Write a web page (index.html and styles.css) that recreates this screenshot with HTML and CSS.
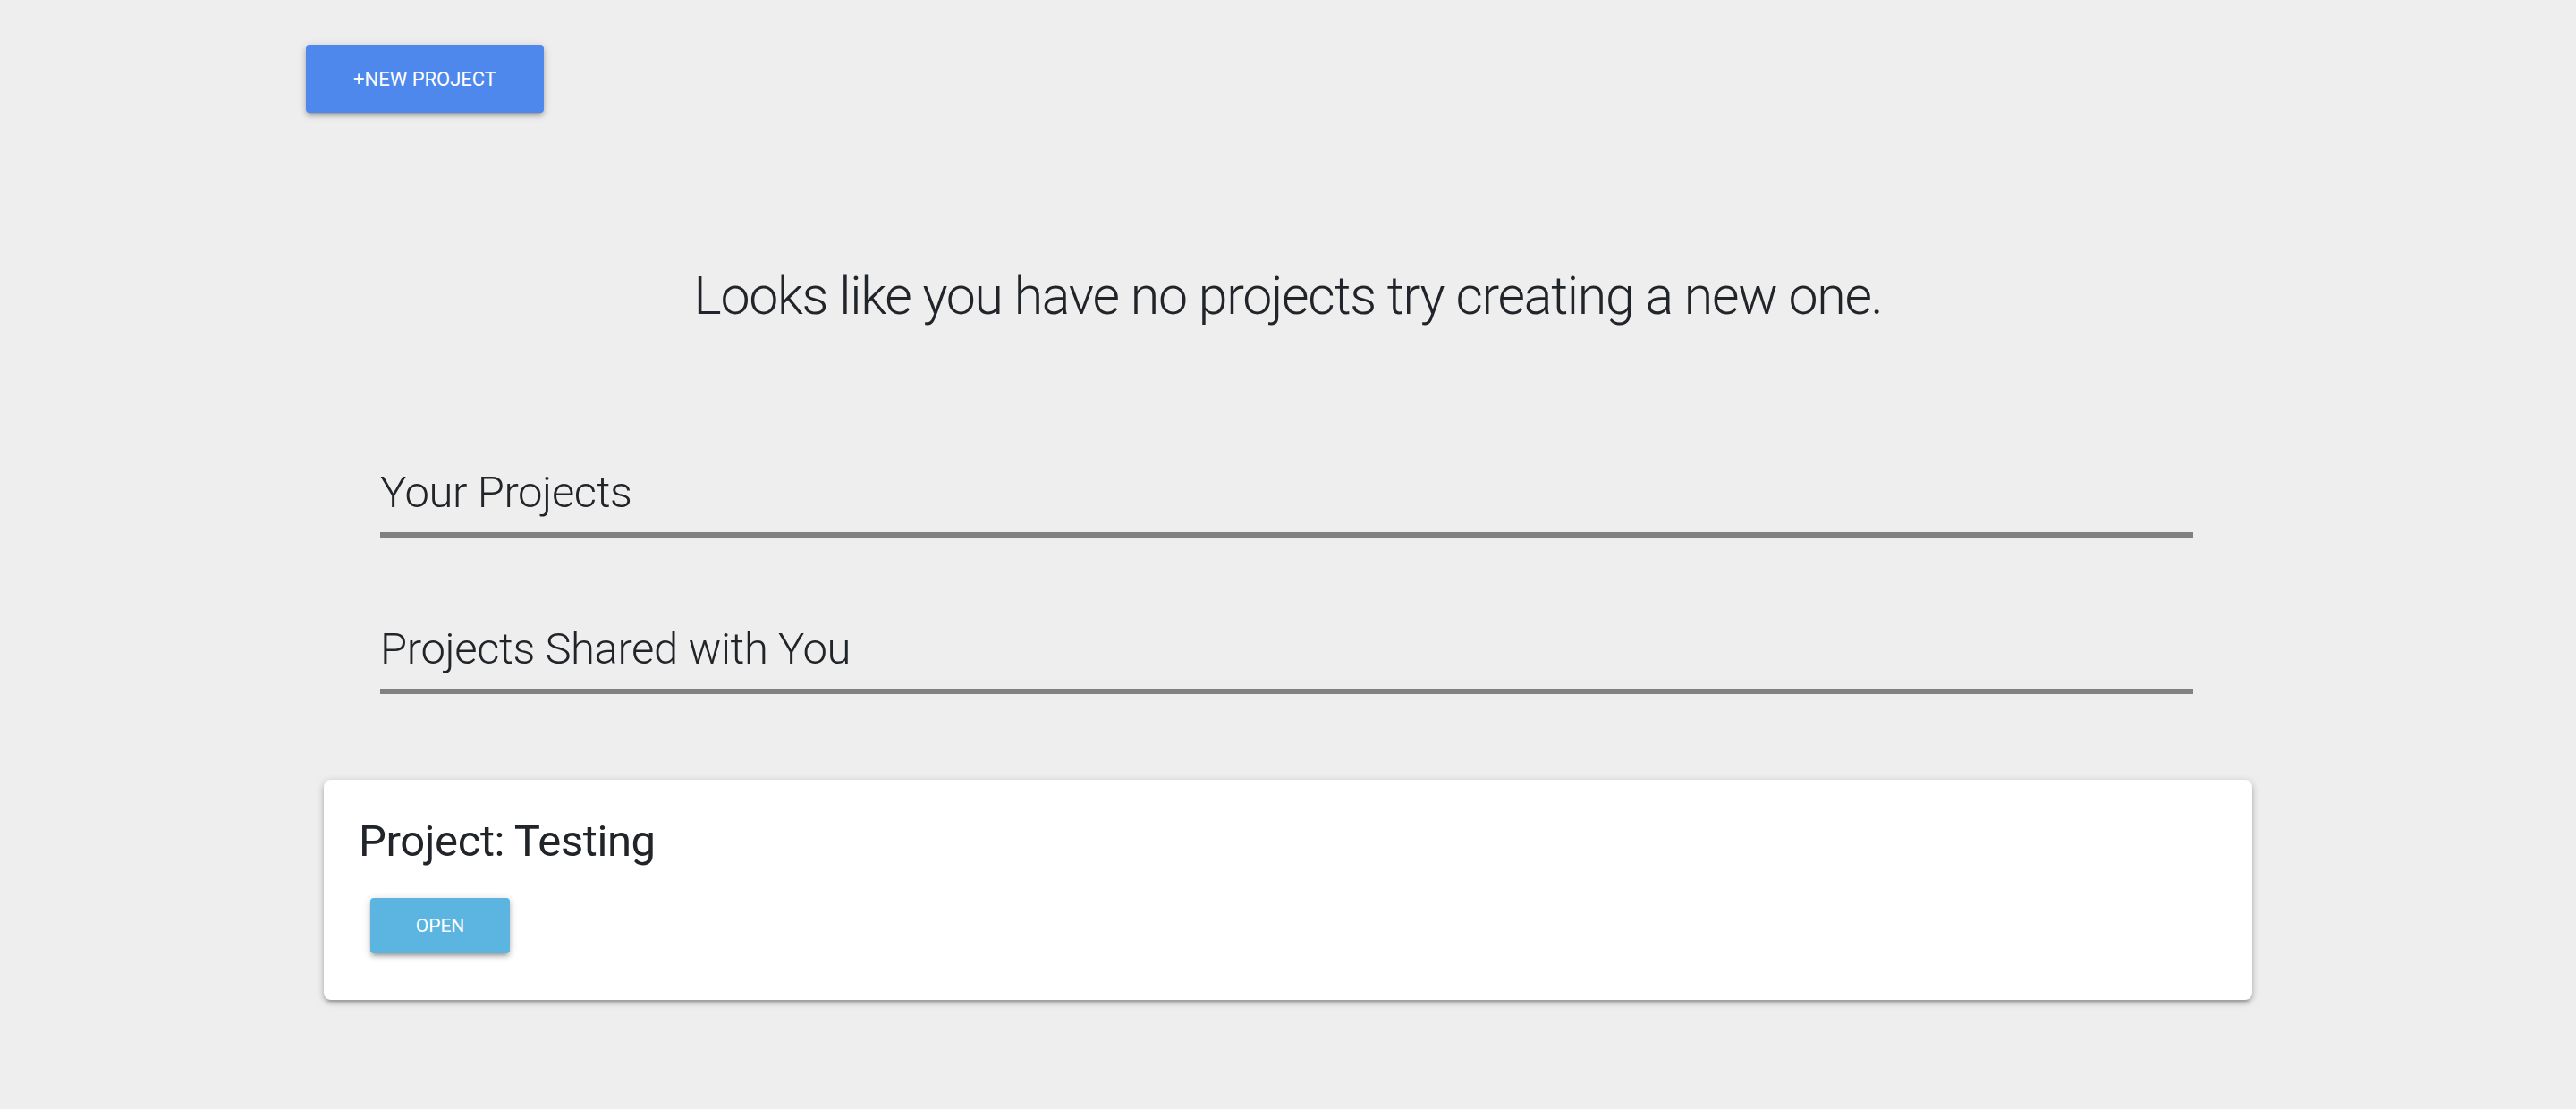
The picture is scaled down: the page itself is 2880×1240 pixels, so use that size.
FILE: index.html
```html
<!DOCTYPE html>
<html lang="en">
<head>
<meta charset="utf-8">
<title>Projects</title>
<link rel="stylesheet" href="styles.css">
</head>
<body>
  <div class="topbar">
    <button class="btn btn-new">+NEW PROJECT</button>
  </div>
  <h1 class="empty-msg">Looks like you have no projects try creating a new one.</h1>
  <div class="sections">
    <section class="section section-own">
      <h2 class="section-title">Your Projects</h2>
    </section>
    <section class="section section-shared">
      <h2 class="section-title">Projects Shared with You</h2>
    </section>
  </div>
  <div class="card">
    <h3 class="card-title">Project: Testing</h3>
    <button class="btn btn-open">OPEN</button>
  </div>
</body>
</html>
```

FILE: styles.css
```css
html, body {
  margin: 0;
  padding: 0;
}
body {
  background: #eeeeee;
  font-family: Roboto, "Liberation Sans", sans-serif;
  color: #212529;
  width: 2880px;
  min-height: 1240px;
}
.topbar {
  padding: 50px 0 0 342px;
  display: flex;
}
.btn {
  border: none;
  color: #ffffff;
  font-family: Roboto, "Liberation Sans", sans-serif;
  font-weight: 400;
  border-radius: 4px;
  padding: 0;
  display: flex;
  align-items: center;
  justify-content: center;
  box-shadow: 0 4px 4px 0 rgba(0,0,0,0.14), 0 6px 2px -4px rgba(0,0,0,0.12), 0 2px 10px 0 rgba(0,0,0,0.2);
  cursor: pointer;
}
.btn-new {
  width: 266px;
  height: 76px;
  background: #4f88ec;
  font-size: 22px;
}
.empty-msg {
  margin: 175px 0 0 0;
  font-size: 59px;
  line-height: 59px;
  font-weight: 300;
  letter-spacing: -1.3px;
  text-align: center;
  color: #212529;
}
.sections {
  margin: 166px 0 0 425px;
  width: 2027px;
  display: flex;
  flex-direction: column;
  gap: 100px;
}
.section-title {
  margin: 0;
  font-size: 49px;
  line-height: 49px;
  font-weight: 300;
  letter-spacing: -0.4px;
  padding-bottom: 20px;
  border-bottom: 6px solid #818181;
  color: #212529;
}
.card {
  margin: 96px 0 0 362px;
  width: 2156px;
  height: 246px;
  box-sizing: border-box;
  background: #ffffff;
  border-radius: 8px;
  padding: 44px 0 0 39px;
  box-shadow: 0 4px 4px 0 rgba(0,0,0,0.14), 0 6px 2px -4px rgba(0,0,0,0.12), 0 2px 10px 0 rgba(0,0,0,0.2);
}
.card-title {
  margin: 0;
  font-size: 49px;
  line-height: 49px;
  font-weight: 400;
  letter-spacing: -0.4px;
  color: #212529;
}
.btn-open {
  margin: 39px 0 0 13px;
  width: 156px;
  height: 62px;
  background: #5bb5e0;
  font-size: 21px;
}
```
